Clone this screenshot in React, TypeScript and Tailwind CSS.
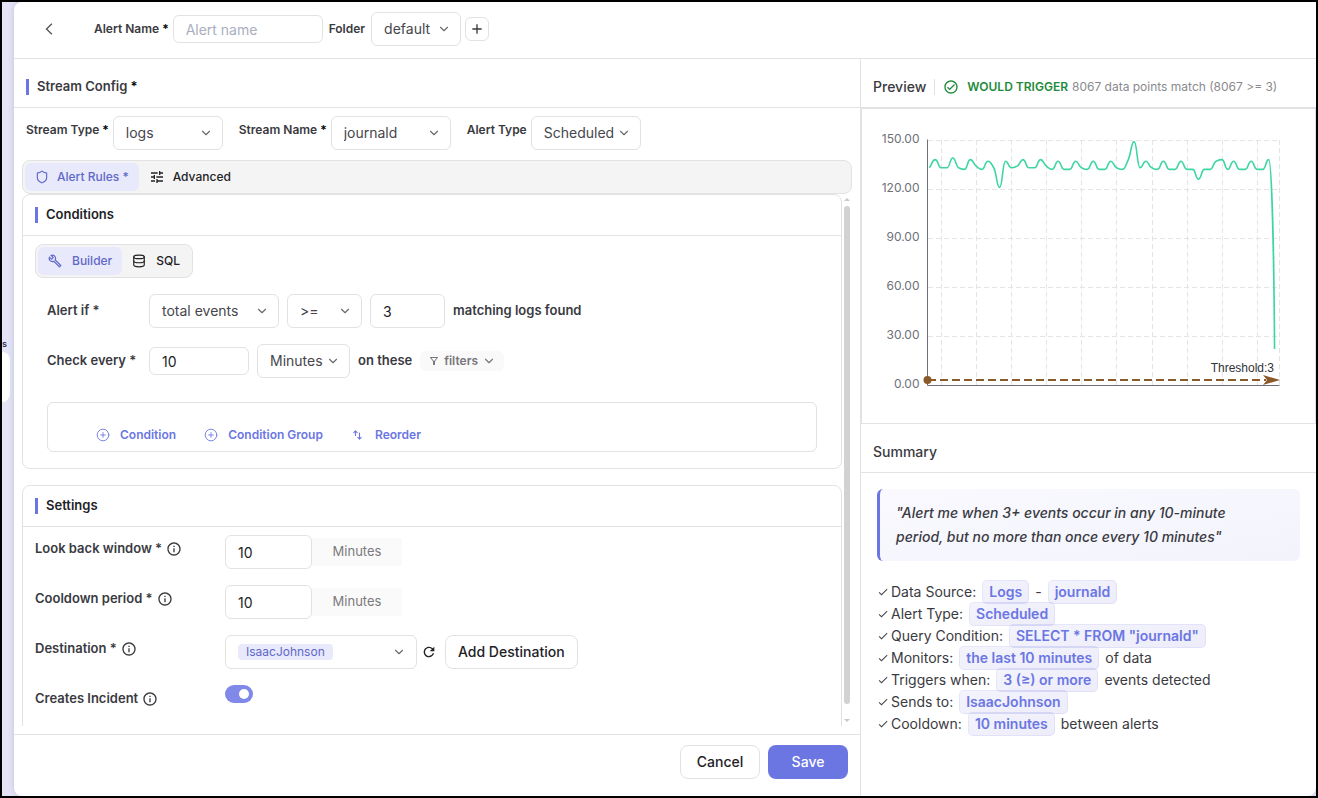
import React from 'react';
import { ChevronDown, CirclePlus, Database, Shield } from 'lucide-react';
import {
  MdAdd,
  MdArrowBackIosNew,
  MdCheck,
  MdInfoOutline,
  MdOutlineBuild,
  MdOutlineCheckCircle,
  MdOutlineFilterAlt,
  MdRefresh,
  MdTune,
} from 'react-icons/md';

const eventCounts = [
  133, 138, 133, 133, 139, 133, 132, 138, 134, 132, 137, 133, 121, 137, 133, 134, 138, 133, 133, 138,
  134, 132, 137, 132, 132, 137, 133, 132, 137, 132, 132, 137, 133, 132, 138, 149, 133, 137, 133, 132,
  137, 132, 132, 137, 132, 132, 126, 132, 132, 137, 138, 132, 137, 132, 132, 137, 132, 132, 138, 22,
];

const yTicks = [150, 120, 90, 60, 30, 0];
const xTicks = [79, 114, 149, 184, 219, 254, 290, 325, 360, 395, 417];

const toY = (value: number) => 276 - (value * 49) / 30;

// Smooth line that never overshoots its points
function buildLine(values: number[]) {
  const step = 5.85;
  const points = values.map((v, i) => ({ x: 67.4 + i * step, y: toY(v) }));
  const slopes = points.map((p, i) => {
    if (i === 0) return (points[1].y - p.y) / step;
    if (i === points.length - 1) return 0;
    const before = (p.y - points[i - 1].y) / step;
    const after = (points[i + 1].y - p.y) / step;
    return before * after <= 0 ? 0 : (2 * before * after) / (before + after);
  });
  return points.reduce((path, p, i) => {
    if (i === 0) return `M${p.x},${p.y}`;
    const prev = points[i - 1];
    const h = step * 0.5;
    // the unfinished last bucket falls off steeply
    const end = i === points.length - 1 ? `${p.x - 0.6},${(p.y + prev.y) / 2}` : `${p.x - h},${p.y - slopes[i] * h}`;
    return `${path}C${prev.x + h},${prev.y + slopes[i - 1] * h} ${end} ${p.x},${p.y}`;
  }, '');
}

type SelectProps = { id: string; value: string; options?: string[]; className: string; label?: string };

function Select({ id, value, options = [], className, label }: SelectProps) {
  return (
    <div className={`relative h-[34px] shrink-0 ${className}`}>
      <select
        id={id}
        aria-label={label}
        defaultValue={value}
        className="h-full w-full appearance-none rounded-md border border-[#e2e2e4] bg-white pl-3 pr-6 text-sm font-normal text-[#46464c] outline-none"
      >
        <option>{value}</option>
        {options.map((option) => (
          <option key={option}>{option}</option>
        ))}
      </select>
      <ChevronDown className="pointer-events-none absolute right-2.5 top-2.5 h-3.5 w-3.5 text-[#6b6b70]" />
    </div>
  );
}

function SectionTitle({ children }: { children: React.ReactNode }) {
  return (
    <div className="flex h-[41px] items-center gap-2 border-b border-[#e2e2e4] px-3">
      <span className="h-4 w-[3px] bg-[#6b76e3]"></span>
      <h2 className="text-[13px] font-semibold text-[#222226]">{children}</h2>
    </div>
  );
}

function SettingRow({ htmlFor, label, children }: { htmlFor: string; label: string; children: React.ReactNode }) {
  return (
    <div className="flex h-[34px] items-start">
      <div className="flex h-7 w-[190px] items-center gap-1">
        <label htmlFor={htmlFor} className="text-[13px] font-semibold text-[#3a3a3f]">{label}</label>
        <MdInfoOutline className="h-4 w-4 text-[#3a3a3f]" />
      </div>
      {children}
    </div>
  );
}

function MinutesInput({ id }: { id: string }) {
  return (
    <div className="flex items-center">
      <input id={id} defaultValue="10" className="h-[34px] w-[87px] rounded-md border border-[#e2e2e4] px-3 text-sm text-[#222226] outline-none" />
      <span className="flex h-7 w-[90px] items-center justify-center bg-[#fafafa] text-[13px] text-[#7a7a7e]">Minutes</span>
    </div>
  );
}

function SwapIcon() {
  return (
    <svg className="h-3.5 w-3.5" viewBox="0 0 14 14" fill="none" stroke="currentColor" strokeWidth="1.1" strokeLinecap="round" strokeLinejoin="round">
      <path d="M4.5 7.5V3M2.8 4.6l1.700-1.700 1.700 1.700M8.500 5V11M6.800 9.400l1.700 1.700 1.700-1.700" />
    </svg>
  );
}

function Tag({ children }: { children: React.ReactNode }) {
  return (
    <span className="flex h-6 items-center rounded-[5px] border border-[#6b76e3]/10 bg-linear-to-br from-[#6b76e3]/8 to-[#6b5fd3]/12 bg-origin-border px-1.5 font-semibold text-[#6b76e3]">
      {children}
    </span>
  );
}

function SummaryItem({ label, children }: { label: string; children: React.ReactNode }) {
  return (
    <li className="flex h-[22px] items-center gap-1.5 whitespace-nowrap">
      <span className="flex items-center gap-0.5">
        <MdCheck className="h-3 w-3 text-[#46464c]" />
        {label}
      </span>
      {children}
    </li>
  );
}

function PreviewChart() {
  return (
    <svg viewBox="0 0 453 314" className="block w-full" role="img" aria-label="Matching events over time">
      <g stroke="#e4e4e6" strokeDasharray="5 3">
        {yTicks.slice(0, 5).map((tick) => (
          <line key={tick} x1="66" x2="418" y1={toY(tick) + 0.5} y2={toY(tick) + 0.5} />
        ))}
        {xTicks.map((x) => (
          <line key={x} x1={x + 0.5} x2={x + 0.5} y1="31" y2="276" />
        ))}
      </g>
      <g fill="#6e7079" fontSize="12" textAnchor="end">
        {yTicks.map((tick) => (
          <text key={tick} x="57.5" y={toY(tick) + 3}>{tick.toFixed(2)}</text>
        ))}
      </g>
      <path d="M65.5 30.5V276.5H417.5" fill="none" stroke="#6e7079" />
      <path d={buildLine(eventCounts)} fill="none" stroke="#3dd6a0" strokeWidth="1.6" strokeLinejoin="bevel" />
      <line x1="66" x2="404" y1="271" y2="271" stroke="#8b5a2b" strokeWidth="2" strokeDasharray="8 4" />
      <circle cx="65.5" cy="271" r="4" fill="#8b5a2b" />
      <path d="M418 271 401 266 405 271 401 276Z" fill="#8b5a2b" />
      <text x="412" y="263" fontSize="12" fill="#333338" textAnchor="end" fontFamily="Liberation Sans, Arial, sans-serif">Threshold:3</text>
    </svg>
  );
}

export default function App() {
  return (
    <div className="flex h-screen overflow-hidden border-2 border-black bg-[#e4e4f6] font-['Inter',sans-serif] text-[#3a3a3f]">
      {/* Edge of the collapsed sidebar */}
      <aside className="flex w-3 shrink-0 flex-col items-start pt-[334px]">
        <span className="text-[9px] font-semibold leading-4 text-[#1f2a5a]">s</span>
        <div className="h-[50px] w-2 rounded-r-lg bg-white"></div>
      </aside>

      <main className="flex min-w-0 flex-1 flex-col overflow-hidden rounded-l-lg rounded-br-lg bg-white shadow-[0_0_6px_rgba(60,60,120,0.2)]">
        <header className="flex h-[57px] shrink-0 items-center border-b border-[#e2e2e4] pb-0.5 pl-7">
          <button aria-label="Back" className="mr-[38px] text-[#5a5a5f]">
            <MdArrowBackIosNew className="h-3.5 w-3.5" />
          </button>
          <label htmlFor="alert-name" className="mr-1 text-xs font-semibold">Alert Name <span className="text-black">*</span></label>
          <input id="alert-name" placeholder="Alert name" className="h-7 w-[150px] rounded-md border border-[#e2e2e4] px-3 text-sm outline-none placeholder:text-[#a9aec0]" />
          <label htmlFor="folder" className="mx-1.5 text-xs font-semibold">Folder</label>
          <Select id="folder" value="default" className="w-[90px]" />
          <button aria-label="Add folder" className="ml-1 flex h-6 w-6 items-center justify-center rounded-md border border-[#e2e2e4]">
            <MdAdd className="h-4 w-4" />
          </button>
        </header>

        <div className="grid min-h-0 flex-1 grid-cols-[minmax(0,1fr)_456px]">
          {/* Form */}
          <div className="flex min-h-0 flex-col">
            <div className="flex h-[49px] shrink-0 items-center gap-2 border-b border-[#e2e2e4] px-3 pt-2">
              <span className="h-4 w-[3px] bg-[#6b76e3]"></span>
              <h2 className="text-[13px] font-semibold">Stream Config <span className="text-black">*</span></h2>
            </div>

            <div className="flex shrink-0 items-start px-3 py-2">
              <label htmlFor="stream-type" className="mr-1 text-xs font-semibold leading-7">Stream Type <span className="text-black">*</span></label>
              <Select id="stream-type" value="logs" options={['metrics', 'traces']} className="mr-4 w-[110px]" />
              <label htmlFor="stream-name" className="mr-1 text-xs font-semibold leading-7">Stream Name <span className="text-black">*</span></label>
              <Select id="stream-name" value="journald" className="mr-4 w-[120px]" />
              <label htmlFor="alert-type" className="mr-1 text-xs font-semibold leading-7">Alert Type</label>
              <Select id="alert-type" value="Scheduled" options={['Real-time']} className="w-[110px]" />
            </div>

            <div className="mx-2 mt-0.5 flex h-[34px] shrink-0 rounded-lg border border-[#e2e2e4] bg-[#f4f4f4] p-0.5 text-xs font-medium">
              <button className="flex h-7 items-center gap-2 rounded-md bg-[#e8e9fb] px-2.5 text-[#5f68c8]">
                <Shield className="h-3.5 w-3.5" /> Alert Rules *
              </button>
              <button className="flex h-7 items-center gap-2 px-2.5 text-[#222226]">
                <MdTune className="h-4 w-4" /> Advanced
              </button>
            </div>

            <div className="mb-2 flex min-h-0 flex-1 pl-2">
              <div className="flex min-w-0 flex-1 flex-col gap-4 overflow-hidden">
                <section className="shrink-0 rounded-lg border border-[#e2e2e4] pb-4">
                  <SectionTitle>Conditions</SectionTitle>
                  <div className="px-3 pt-2">
                    <div className="inline-flex h-[34px] rounded-lg border border-[#e2e2e4] bg-[#f4f4f4] p-0.5 text-xs font-medium">
                      <button className="flex h-7 items-center gap-2.5 rounded-md bg-[#e8e9fb] px-2.5 text-[#5f68c8]">
                        <MdOutlineBuild className="h-3.5 w-3.5" /> Builder
                      </button>
                      <button className="flex h-7 items-center gap-2.5 px-2.5 text-[#222226]">
                        <Database className="h-3.5 w-3.5" /> SQL
                      </button>
                    </div>
                  </div>

                  <div className="flex flex-col gap-4 px-6 pt-4 text-[13px] font-semibold">
                    <div className="flex items-center gap-2">
                      <label htmlFor="alert-if" className="w-[94px]">Alert if *</label>
                      <Select id="alert-if" value="total events" className="w-[130px]" />
                      <Select id="operator" label="Operator" value=">=" options={['<=', '=']} className="w-[75px]" />
                      <input aria-label="Threshold" defaultValue="3" className="h-[34px] w-[75px] rounded-md border border-[#e2e2e4] px-3 text-sm font-normal text-[#222226] outline-none" />
                      <span>matching logs found</span>
                    </div>
                    <div className="flex items-center gap-2">
                      <label htmlFor="check-every" className="w-[94px]">Check every *</label>
                      <input id="check-every" defaultValue="10" className="h-7 w-[100px] rounded-md border border-[#e2e2e4] px-3 text-sm font-normal text-[#222226] outline-none" />
                      <Select id="check-unit" label="Check unit" value="Minutes" options={['Hours']} className="w-[93px]" />
                      <span>on these</span>
                      <button className="flex h-5 items-center gap-1 rounded-md bg-[#f9f9f9] px-2 text-xs font-semibold text-[#77777b]">
                        <MdOutlineFilterAlt className="h-3 w-3" />
                        filters
                        <ChevronDown className="h-3.5 w-3.5" />
                      </button>
                    </div>
                    <div className="mt-2 flex h-[50px] items-end gap-7 rounded-md border border-[#e2e2e4] px-12 pb-2 text-xs text-[#6b76e3]">
                      <button className="flex items-center gap-2.5">
                        <CirclePlus className="h-3.5 w-3.5" strokeWidth={1.5} /> Condition
                      </button>
                      <button className="flex items-center gap-2.5">
                        <CirclePlus className="h-3.5 w-3.5" strokeWidth={1.5} /> Condition Group
                      </button>
                      <button className="flex items-center gap-2.5">
                        <SwapIcon /> Reorder
                      </button>
                    </div>
                  </div>
                </section>

                <section className="shrink-0 rounded-lg border border-[#e2e2e4]">
                  <SectionTitle>Settings</SectionTitle>
                  <div className="flex flex-col gap-4 px-3 pb-6 pt-2">
                    <SettingRow htmlFor="look-back" label="Look back window *">
                      <MinutesInput id="look-back" />
                    </SettingRow>
                    <SettingRow htmlFor="cooldown" label="Cooldown period *">
                      <MinutesInput id="cooldown" />
                    </SettingRow>
                    <SettingRow htmlFor="destination" label="Destination *">
                      <div className="flex h-[34px] w-48 items-center justify-between rounded-md border border-[#e2e2e4] pl-3 pr-2.5">
                        <select id="destination" defaultValue="IsaacJohnson" className="h-4 appearance-none rounded-sm bg-[#e8e9fb] px-2 text-xs leading-4 text-[#5f68c8] outline-none">
                          <option>IsaacJohnson</option>
                        </select>
                        <ChevronDown className="h-3.5 w-3.5 text-[#6b6b70]" />
                      </div>
                      <button aria-label="Refresh destinations" className="flex h-[34px] w-7 items-center justify-center pr-1 text-[#222226]">
                        <MdRefresh className="h-4 w-4" />
                      </button>
                      <button className="h-[34px] rounded-lg border border-[#e2e2e4] px-3 text-sm font-medium text-[#222226]">Add Destination</button>
                    </SettingRow>
                    <SettingRow htmlFor="creates-incident" label="Creates Incident">
                      <input
                        id="creates-incident"
                        type="checkbox"
                        role="switch"
                        defaultChecked
                        className="flex h-[18px] w-7 appearance-none items-center rounded-full bg-gray-300 px-1 before:h-2.5 before:w-2.5 before:rounded-full before:bg-white checked:justify-end checked:bg-[#8088e8]"
                      />
                    </SettingRow>
                  </div>
                </section>
              </div>

              {/* Scroll track */}
              <div className="mr-2 flex w-2.5 shrink-0 flex-col items-center pb-0.5 pt-1">
                <svg className="h-2 w-2" viewBox="0 0 8 8" fill="#c8c8c8"><path d="M1 3h6L4 0Z" /></svg>
                <div className="mb-3 w-1.5 flex-1 rounded-full bg-[#d2d2d2]"></div>
                <svg className="h-2 w-2" viewBox="0 0 8 8" fill="#c8c8c8"><path d="M1 3h6L4 6Z" /></svg>
              </div>
            </div>

            <footer className="flex h-[62px] shrink-0 items-start justify-end gap-2 border-t border-[#e2e2e4] px-3 pt-2.5">
              <button className="h-[34px] w-20 rounded-lg border border-[#e2e2e4] text-sm font-medium text-[#222226]">Cancel</button>
              <button className="h-[34px] w-20 rounded-lg bg-[#6b76e3] text-sm font-medium text-white">Save</button>
            </footer>
          </div>

          {/* Preview and summary */}
          <aside className="flex min-h-0 flex-col border-l border-[#e2e2e4]">
            <div className="flex h-[49px] shrink-0 items-center border-b border-[#e2e2e4] px-3 pt-2 text-xs">
              <h2 className="mr-2 text-sm font-medium">Preview</h2>
              <span className="mr-2 h-4 w-px bg-[#e2e2e4]"></span>
              <MdOutlineCheckCircle className="mr-2 h-4 w-4 text-[#1f8a3b]" />
              <strong className="mr-1 font-semibold text-[#1f8a3b]">WOULD TRIGGER</strong>
              <span className="text-[#8a8a8e]">8067 data points match (8067 &gt;= 3)</span>
            </div>
            <div className="shrink-0 border border-[#e2e2e4]">
              <PreviewChart />
            </div>
            <div className="flex h-[49px] shrink-0 items-center border-b border-[#e2e2e4] px-3 pt-2">
              <h2 className="text-sm font-medium">Summary</h2>
            </div>
            <div className="p-4 text-sm">
              <blockquote className="mb-5 rounded-md border-l-[3px] border-[#6b76e3] bg-linear-to-br from-[#f9f9fe] to-[#f3f3fd] px-4 py-3 font-medium italic leading-6">
                "Alert me when 3+ events occur in any 10-minute
                <br />
                period, but no more than once every 10 minutes"
              </blockquote>
              <ul className="flex flex-col">
                <SummaryItem label="Data Source:"><Tag>Logs</Tag> - <Tag>journald</Tag></SummaryItem>
                <SummaryItem label="Alert Type:"><Tag>Scheduled</Tag></SummaryItem>
                <SummaryItem label="Query Condition:"><Tag>SELECT * FROM "journald"</Tag></SummaryItem>
                <SummaryItem label="Monitors:"><Tag>the last 10 minutes</Tag> of data</SummaryItem>
                <SummaryItem label="Triggers when:"><Tag>3 (≥) or more</Tag> events detected</SummaryItem>
                <SummaryItem label="Sends to:"><Tag>IsaacJohnson</Tag></SummaryItem>
                <SummaryItem label="Cooldown:"><Tag>10 minutes</Tag> between alerts</SummaryItem>
              </ul>
            </div>
          </aside>
        </div>
      </main>
    </div>
  );
}
